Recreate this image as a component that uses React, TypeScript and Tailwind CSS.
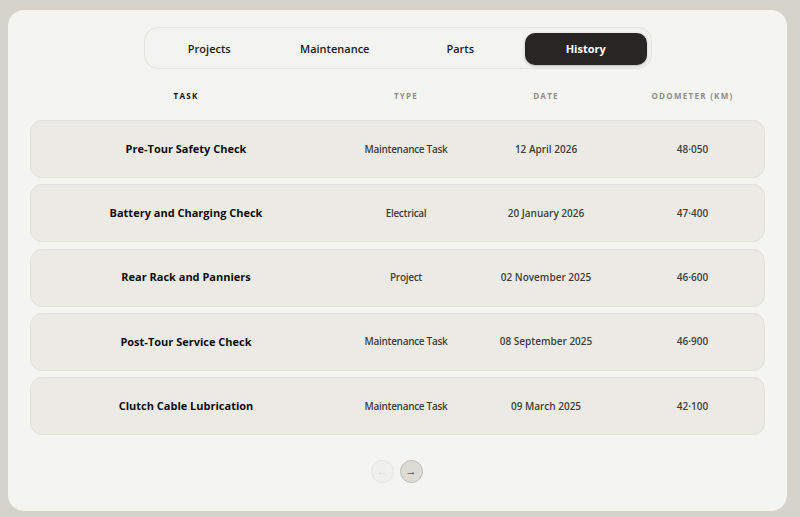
import React, { useState } from "react";

const tabs = ["Projects", "Maintenance", "Parts", "History"];

const rows = [
  { task: "Pre-Tour Safety Check", type: "Maintenance Task", date: "12 April 2026", km: "48·050" },
  { task: "Battery and Charging Check", type: "Electrical", date: "20 January 2026", km: "47·400" },
  { task: "Rear Rack and Panniers", type: "Project", date: "02 November 2025", km: "46·600" },
  { task: "Post-Tour Service Check", type: "Maintenance Task", date: "08 September 2025", km: "46·900" },
  { task: "Clutch Cable Lubrication", type: "Maintenance Task", date: "09 March 2025", km: "42·100" },
];

const cols = "grid grid-cols-[310px_130px_150px_1fr] items-center text-center";

export default function App() {
  const [active, setActive] = useState("History");

  return (
    <div className="h-[517px] w-[800px] bg-[#d6d3ca] pt-[10px] pl-[8px] font-['Open_Sans',sans-serif]">
      <div className="flex h-[501px] w-[779px] flex-col items-center rounded-[16px] bg-[#f4f4f1] pt-[17px]">
        {/* tabs */}
        <div className="flex h-[42px] w-[508px] items-center gap-[4px] rounded-[14px] border border-[#e4e3dd] bg-[#f3f3ef] px-[4px] pt-[2px]">
          {tabs.map((t) => (
            <button
              key={t}
              onClick={() => setActive(t)}
              className={
                t === active
                  ? "h-[32px] w-[122px] rounded-[10px] bg-[#282624] text-[11px] font-bold text-white shadow-[0_1px_3px_rgba(0,0,0,0.25)]"
                  : "h-[32px] w-[122px] text-[11px] font-semibold text-[#1c1c1c]"
              }
            >
              {t}
            </button>
          ))}
        </div>

        {/* header */}
        <div className={`${cols} mt-[21px] w-[735px] px-px text-[8px] font-bold tracking-[0.16em] text-[#8f8e8a]`}>
          <span className="text-[#111]">TASK</span>
          <span>TYPE</span>
          <span>DATE</span>
          <span>ODOMETER (KM)</span>
        </div>

        {/* rows */}
        <div className="mt-[18px] flex w-[735px] flex-col gap-[6.3px]">
          {rows.map((r) => (
            <div
              key={r.task}
              className={`${cols} h-[58px] rounded-[12px] border border-[#e1e0d9] bg-[#ebeae5] text-[10px] font-semibold text-[#403f3c]`}
            >
              <span className="text-[11px] font-bold text-[#0d0d0d]">{r.task}</span>
              <span className="tracking-[-0.03em]">{r.type}</span>
              <span>{r.date}</span>
              <span>{r.km}</span>
            </div>
          ))}
        </div>

        {/* pagination */}
        <div className="mt-[25px] flex gap-[6px] pr-[2px]">
          <button className="flex h-[23px] w-[23px] items-center justify-center rounded-full border border-[#e6e5e0] bg-[#efefec] text-[10px] text-[#cfceca]">
            ←
          </button>
          <button className="flex h-[23px] w-[23px] items-center justify-center rounded-full border border-[#bcbbb5] bg-[#dcdbd6] text-[11px] text-[#222]">
            →
          </button>
        </div>
      </div>
    </div>
  );
}
